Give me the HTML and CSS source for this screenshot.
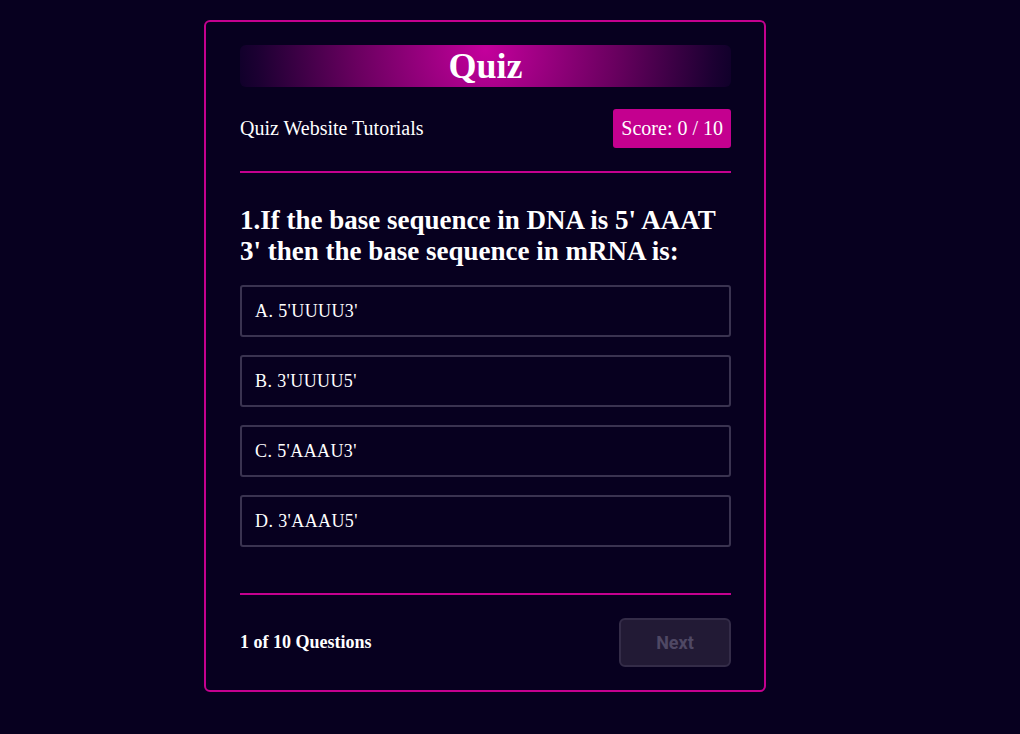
FILE: index.html
```html
<!DOCTYPE html>
<html lang="en">
<head>
<meta charset="utf-8">
<title>Quiz</title>
<link rel="stylesheet" href="styles.css">
</head>
<body>
<div class="card">
  <h1 class="title">Quiz</h1>
  <div class="meta">
    <span class="site">Quiz Website Tutorials</span>
    <span class="score">Score: 0 / 10</span>
  </div>
  <hr class="rule">
  <h2 class="question">1.If the base sequence in DNA is 5' AAAT 3' then the base sequence in mRNA is:</h2>
  <ul class="options">
    <li class="option">A. 5'UUUU3'</li>
    <li class="option">B. 3'UUUU5'</li>
    <li class="option">C. 5'AAAU3'</li>
    <li class="option">D. 3'AAAU5'</li>
  </ul>
  <hr class="rule rule-bottom">
  <div class="footer">
    <span class="count">1 of 10 Questions</span>
    <button class="next" disabled>Next</button>
  </div>
</div>
</body>
</html>
```
FILE: styles.css
```css
html, body {
  margin: 0;
  padding: 0;
  background: #07001f;
}
body {
  font-family: "Liberation Serif", "Times New Roman", serif;
  color: #ffffff;
  padding-top: 20px;
}
.card {
  box-sizing: border-box;
  width: 562px;
  height: 672px;
  margin-left: 204px;
  border: 2px solid #c4008f;
  border-radius: 6px;
  padding: 23px 33px 23px 34px;
  background: #07001f;
}
.title {
  margin: 0;
  height: 42px;
  line-height: 42px;
  text-align: center;
  font-size: 36px;
  font-weight: bold;
  border-radius: 6px;
  background: radial-gradient(circle farthest-corner at 50% 10%, #c4009c 0%, #6a0060 52%, #1c0032 92%, #10002a 100%);
}
.meta {
  margin-top: 22px;
  display: flex;
  justify-content: space-between;
  align-items: center;
  height: 39px;
  font-size: 20px;
}
.score {
  background: #c4008f;
  border-radius: 3px;
  height: 39px;
  line-height: 39px;
  padding: 0 8px;
  font-size: 20px;
}
.rule {
  margin: 23px 0 0 0;
  border: 0;
  height: 2px;
  background: #c4008f;
}
.question {
  margin: 32px 0 0 0;
  font-size: 27px;
  line-height: 31px;
  font-weight: bold;
}
.options {
  list-style: none;
  margin: 18px 0 0 0;
  padding: 0;
  display: flex;
  flex-direction: column;
  gap: 18px;
}
.option {
  box-sizing: border-box;
  height: 52px;
  border: 2px solid #3a3350;
  border-radius: 3px;
  padding: 0 13px;
  display: flex;
  align-items: center;
  font-size: 18px;
  letter-spacing: 0.4px;
}
.rule-bottom {
  margin-top: 46px;
}
.footer {
  margin-top: 23px;
  display: flex;
  justify-content: space-between;
  align-items: center;
}
.count {
  font-size: 18px;
  font-weight: bold;
}
.next {
  width: 112px;
  height: 49px;
  box-sizing: border-box;
  background: #221a35;
  border: 2px solid #342c48;
  border-radius: 6px;
  color: #4f4864;
  font-family: Roboto, "Liberation Sans", Arial, sans-serif;
  font-weight: bold;
  font-size: 18px;
}
```
